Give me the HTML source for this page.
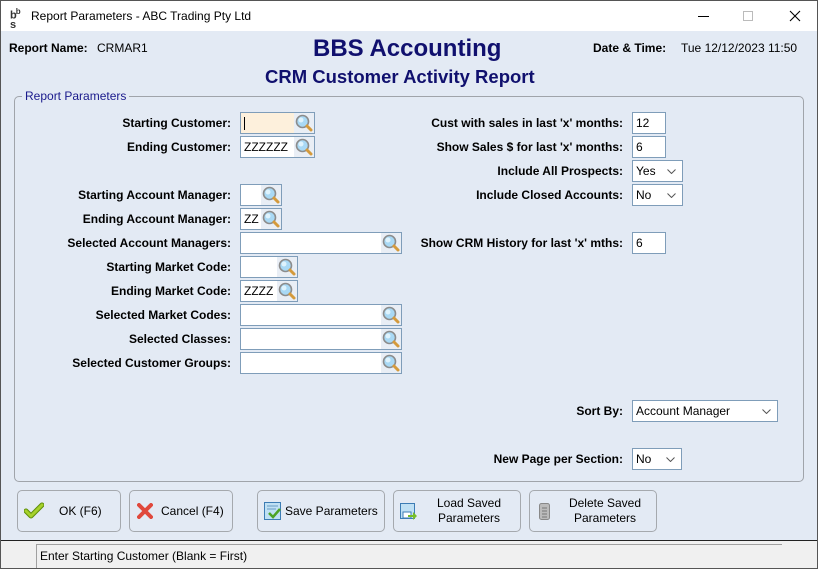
<!DOCTYPE html>
<html><head><meta charset="utf-8"><style>
*{box-sizing:border-box;margin:0;padding:0}
body{width:818px;height:569px;overflow:hidden;font-family:"Liberation Sans",Arial,sans-serif;font-size:12px;color:#000;background:#e3eaf4;position:relative}
.win{position:absolute;left:0;top:0;width:818px;height:569px;border:1px solid #555}
.title{position:absolute;left:1px;top:1px;width:816px;height:30px;background:#fff}
.a{position:absolute;white-space:nowrap}
.lbl{position:absolute;font-weight:bold;text-align:right;white-space:nowrap;line-height:14px}
.box{position:absolute;background:#fff;border:1px solid #7f9db9;height:22px;padding-left:3px;line-height:20px;font-size:12px}
.mag{position:absolute;right:0;top:0;width:20px;height:20px;background:#e9eef5}
.sel{position:absolute;background:#fff;border:1px solid #7f9db9;height:22px;padding-left:3px;line-height:20px}
.sel svg{position:absolute;right:6px;top:8px}
.btn{position:absolute;top:490px;height:42px;border:1px solid #a5a9ae;border-radius:5px;background:#e3eaf4;font-size:12px;color:#000}
.btn span{position:absolute;text-align:center;line-height:15px}
</style></head><body>
<div class="title">
<div class="a" style="left:9px;top:6px;font-size:11px;line-height:9px;color:#333;font-weight:bold;letter-spacing:-1px">b<sup style="font-size:8px">b</sup><br>s</div>
<div class="a" style="left:30px;top:8px;font-size:12px">Report Parameters - ABC Trading Pty Ltd</div>
<div class="a" style="left:697px;top:15px;width:11px;height:1px;background:#000"></div>
<div class="a" style="left:742px;top:10px;width:10px;height:10px;border:1px solid #bbb"></div>
<svg class="a" style="left:788px;top:9px" width="12" height="12"><path d="M1 1L11 11M11 1L1 11" stroke="#000" stroke-width="1.1"/></svg>
</div>
<div class="win"></div>
<div class="lbl" style="left:9px;top:41px">Report Name:</div>
<div class="a" style="left:97px;top:41px">CRMAR1</div>
<div class="a" style="left:313px;top:35px;font-size:24px;font-weight:bold;color:#10106e">BBS Accounting</div>
<div class="a" style="left:265px;top:66px;font-size:18.5px;font-weight:bold;color:#10106e">CRM Customer Activity Report</div>
<div class="lbl" style="left:593px;top:41px">Date &amp; Time:</div>
<div class="a" style="left:681px;top:41px">Tue 12/12/2023 11:50</div>

<div class="a" style="left:14px;top:96px;width:790px;height:386px;border:1px solid #a0a4aa;border-radius:5px"></div>
<div class="a" style="left:22px;top:89px;background:#e3eaf4;padding:0 3px;color:#1a1a8c;font-size:12px">Report Parameters</div>

<!-- left labels -->
<div class="lbl" style="right:587px;top:116px">Starting Customer:</div>
<div class="lbl" style="right:587px;top:140px">Ending Customer:</div>
<div class="lbl" style="right:587px;top:188px">Starting Account Manager:</div>
<div class="lbl" style="right:587px;top:212px">Ending Account Manager:</div>
<div class="lbl" style="right:587px;top:236px">Selected Account Managers:</div>
<div class="lbl" style="right:587px;top:260px">Starting Market Code:</div>
<div class="lbl" style="right:587px;top:284px">Ending Market Code:</div>
<div class="lbl" style="right:587px;top:308px">Selected Market Codes:</div>
<div class="lbl" style="right:587px;top:332px">Selected Classes:</div>
<div class="lbl" style="right:587px;top:356px">Selected Customer Groups:</div>

<svg width="0" height="0" style="position:absolute"><defs><symbol id="m" viewBox="0 0 20 20"><circle cx="8.5" cy="8.5" r="6" fill="#a9d9f5" stroke="#8c8c8c" stroke-width="1.6"/><circle cx="7" cy="7" r="2.5" fill="#dff3fd"/><path d="M13 13L17 17" stroke="#d49a3c" stroke-width="3" stroke-linecap="round"/></symbol></defs></svg>

<div class="box" style="left:240px;top:112px;width:75px;background:#fdf0dc"><span style="display:inline-block;width:1px;height:13px;background:#000;margin-top:4px"></span><div class="mag"><svg width="20" height="20"><use href="#m"/></svg></div></div>
<div class="box" style="left:240px;top:136px;width:75px">ZZZZZZ<div class="mag"><svg width="20" height="20"><use href="#m"/></svg></div></div>
<div class="box" style="left:240px;top:184px;width:42px"><div class="mag"><svg width="20" height="20"><use href="#m"/></svg></div></div>
<div class="box" style="left:240px;top:208px;width:42px">ZZ<div class="mag"><svg width="20" height="20"><use href="#m"/></svg></div></div>
<div class="box" style="left:240px;top:232px;width:162px"><div class="mag"><svg width="20" height="20"><use href="#m"/></svg></div></div>
<div class="box" style="left:240px;top:256px;width:58px"><div class="mag"><svg width="20" height="20"><use href="#m"/></svg></div></div>
<div class="box" style="left:240px;top:280px;width:58px">ZZZZ<div class="mag"><svg width="20" height="20"><use href="#m"/></svg></div></div>
<div class="box" style="left:240px;top:304px;width:162px"><div class="mag"><svg width="20" height="20"><use href="#m"/></svg></div></div>
<div class="box" style="left:240px;top:328px;width:162px"><div class="mag"><svg width="20" height="20"><use href="#m"/></svg></div></div>
<div class="box" style="left:240px;top:352px;width:162px"><div class="mag"><svg width="20" height="20"><use href="#m"/></svg></div></div>

<!-- right -->
<div class="lbl" style="right:195px;top:116px">Cust with sales in last 'x' months:</div>
<div class="lbl" style="right:195px;top:140px">Show Sales $ for last 'x' months:</div>
<div class="lbl" style="right:195px;top:164px">Include All Prospects:</div>
<div class="lbl" style="right:195px;top:188px">Include Closed Accounts:</div>
<div class="lbl" style="right:195px;top:236px">Show CRM History for last 'x' mths:</div>
<div class="lbl" style="right:195px;top:404px">Sort By:</div>
<div class="lbl" style="right:195px;top:452px">New Page per Section:</div>

<div class="box" style="left:632px;top:112px;width:34px">12</div>
<div class="box" style="left:632px;top:136px;width:34px">6</div>
<div class="sel" style="left:632px;top:160px;width:51px">Yes<svg width="9" height="5"><path d="M0.5 0.5L4.5 4.5L8.5 0.5" fill="none" stroke="#555"/></svg></div>
<div class="sel" style="left:632px;top:184px;width:51px">No<svg width="9" height="5"><path d="M0.5 0.5L4.5 4.5L8.5 0.5" fill="none" stroke="#555"/></svg></div>
<div class="box" style="left:632px;top:232px;width:34px">6</div>
<div class="sel" style="left:632px;top:400px;width:146px">Account Manager<svg width="9" height="5"><path d="M0.5 0.5L4.5 4.5L8.5 0.5" fill="none" stroke="#555"/></svg></div>
<div class="sel" style="left:632px;top:448px;width:50px">No<svg width="9" height="5"><path d="M0.5 0.5L4.5 4.5L8.5 0.5" fill="none" stroke="#555"/></svg></div>

<!-- buttons -->
<div class="btn" style="left:17px;width:104px">
<svg class="a" style="left:6px;top:11px" width="20" height="18"><path d="M2 9L7 14L18 3" fill="none" stroke="#5e8e0a" stroke-width="5" stroke-linecap="round" stroke-linejoin="round"/><path d="M2 9L7 14L18 3" fill="none" stroke="#a6d12c" stroke-width="3" stroke-linecap="round" stroke-linejoin="round"/></svg>
<span style="left:41px;top:13px">OK (F6)</span></div>
<div class="btn" style="left:129px;width:104px">
<svg class="a" style="left:7px;top:12px" width="16" height="16"><path d="M2 2L14 14M14 2L2 14" stroke="#e0483c" stroke-width="4" stroke-linecap="round"/></svg>
<span style="left:31px;top:13px">Cancel (F4)</span></div>
<div class="btn" style="left:257px;width:128px">
<svg class="a" style="left:6px;top:11px" width="18" height="19"><rect x="0.5" y="0.5" width="16" height="17" fill="#bfe0f4" stroke="#3c7cb4"/><path d="M3 4h11M3 7h9" stroke="#6a9cc4"/><path d="M5 11L9 15L16 7" fill="none" stroke="#4da326" stroke-width="2.5"/></svg>
<span style="left:27px;top:13px">Save Parameters</span></div>
<div class="btn" style="left:393px;width:128px">
<svg class="a" style="left:6px;top:12px" width="18" height="18"><rect x="0.5" y="0.5" width="14" height="15" fill="#bfe0f4" stroke="#3c7cb4"/><rect x="3" y="9" width="8" height="6" fill="#fff" stroke="#3c7cb4"/><path d="M8 12h5V9l4 4-4 4v-3H8z" fill="#78be28"/></svg>
<span style="left:30px;top:5px;width:90px">Load Saved<br>Parameters</span></div>
<div class="btn" style="left:529px;width:128px">
<svg class="a" style="left:9px;top:12px" width="12" height="18"><rect x="0.5" y="0.5" width="10" height="16" rx="2" fill="#bbb" stroke="#888"/><path d="M3 5h5M3 8h5M3 11h5M3 14h5" stroke="#777"/></svg>
<span style="left:30px;top:5px;width:90px">Delete Saved<br>Parameters</span></div>

<!-- status -->
<div class="a" style="left:1px;top:540px;width:816px;height:28px;background:#f0f0f0;border-top:1px solid #222"></div>
<div class="a" style="left:36px;top:544px;width:746px;height:24px;border-left:1px solid #a0a0a0;border-top:1px solid #a0a0a0;background:#f0f0f0;padding-left:3px;line-height:22px">Enter Starting Customer (Blank = First)</div>
</body></html>
